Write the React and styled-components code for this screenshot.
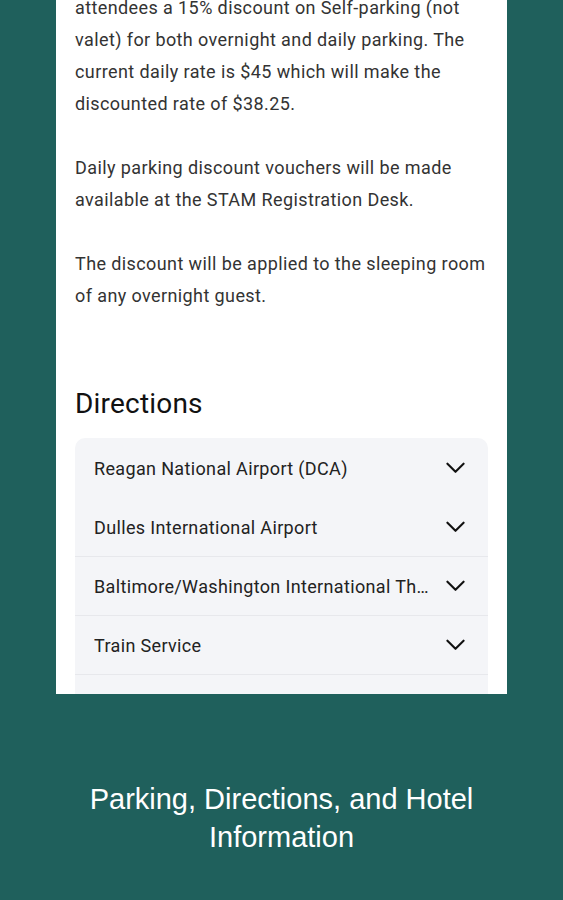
import * as React from "react";
import styled, { createGlobalStyle } from "styled-components";

const GlobalStyle = createGlobalStyle`
  html, body {
    margin: 0;
    padding: 0;
    background: #1f605c;
  }
`;

const paragraphs = [
  "attendees a 15% discount on Self-parking (not valet) for both overnight and daily parking. The current daily rate is $45 which will make the discounted rate of $38.25.",
  "Daily parking discount vouchers will be made available at the STAM Registration Desk.",
  "The discount will be applied to the sleeping room of any overnight guest.",
];

const directions = [
  { label: "Reagan National Airport (DCA)", divider: false },
  { label: "Dulles International Airport", divider: false },
  { label: "Baltimore/Washington International Thurgood Marshall Airport (BWI)", divider: true },
  { label: "Train Service", divider: true },
  { label: "", divider: true },
];

export default function App() {
  return (
    <>
      <GlobalStyle />
      <Page>
        <Screen>
          <Content>
            {paragraphs.map((p, i) => (
              <Paragraph key={i}>{p}</Paragraph>
            ))}
            <SectionTitle>Directions</SectionTitle>
            <Accordion>
              {directions.map((d, i) => (
                <Row key={i} $divider={d.divider}>
                  <RowLabel>{d.label}</RowLabel>
                  {d.label && <Chevron />}
                </Row>
              ))}
            </Accordion>
          </Content>
        </Screen>
        <Caption>Parking, Directions, and Hotel Information</Caption>
      </Page>
    </>
  );
}

function Chevron() {
  return (
    <ChevronIcon viewBox="0 0 20 12" fill="none">
      <path
        d="M1.5 1.5 L10 10 L18.5 1.5"
        stroke="#111"
        strokeWidth="2.2"
        strokeLinecap="round"
        strokeLinejoin="round"
      />
    </ChevronIcon>
  );
}

const Page = styled.div`
  width: 563px;
  height: 900px;
  background: #1f605c;
  display: flex;
  flex-direction: column;
  align-items: center;
  overflow: hidden;
`;

const Screen = styled.div`
  width: 451px;
  height: 694px;
  background: #fff;
  overflow: hidden;
  flex-shrink: 0;
`;

const Content = styled.div`
  margin-top: -8px;
  padding: 0 19px;
  display: flex;
  flex-direction: column;
`;

const Paragraph = styled.p`
  margin: 0 0 32px;
  font: 400 18px/32px Roboto, sans-serif;
  letter-spacing: 0.4px;
  color: #333;
`;

const SectionTitle = styled.h2`
  margin: 40px 0 14px;
  font: 400 28px/40px Roboto, sans-serif;
  letter-spacing: 0.2px;
  color: #111;
`;

const Accordion = styled.div`
  background: #f4f5f8;
  border-radius: 10px 10px 0 0;
  display: flex;
  flex-direction: column;
`;

const Row = styled.div`
  height: 59px;
  display: flex;
  align-items: center;
  gap: 14px;
  padding: 0 23px 0 19px;
  border-top: 1px solid ${(p) => (p.$divider ? "#e7e8ec" : "transparent")};
  box-sizing: border-box;
`;

const RowLabel = styled.span`
  flex: 1;
  min-width: 0;
  white-space: nowrap;
  overflow: hidden;
  text-overflow: ellipsis;
  font: 400 18px Roboto, sans-serif;
  letter-spacing: 0.35px;
  color: #222;
`;

const ChevronIcon = styled.svg`
  width: 19px;
  height: 12px;
  flex-shrink: 0;
`;

const Caption = styled.div`
  margin-top: 86px;
  width: 440px;
  text-align: center;
  font: 400 29px/38px "Liberation Sans", Arial, sans-serif;
  color: #fff;
`;
